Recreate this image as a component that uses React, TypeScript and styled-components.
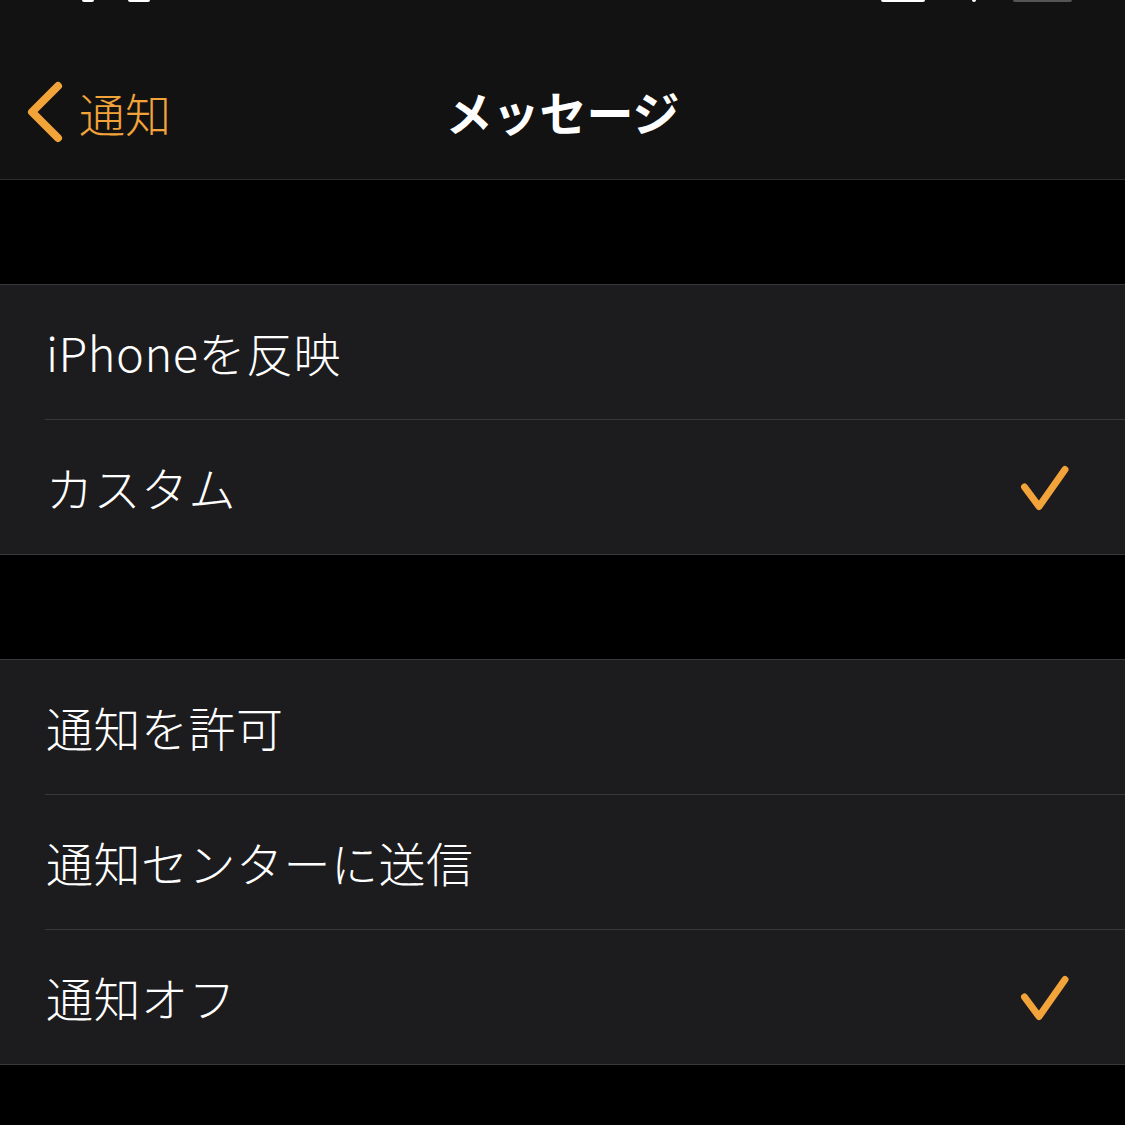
import styled, { createGlobalStyle } from "styled-components";

const GlobalStyle = createGlobalStyle`
  html, body {
    margin: 0;
    padding: 0;
    background: #000;
  }
  body {
    font-family: "Noto Sans CJK JP", "Noto Sans", sans-serif;
    color: #fff;
  }
`;

const ORANGE = "#f2a33a";

const Page = styled.div`
  width: 1125px;
  min-height: 1125px;
  background: #000;
  overflow: hidden;
`;

const NavBar = styled.header`
  height: 180px;
  background: #121212;
  border-bottom: 1px solid #2e2e30;
  box-sizing: border-box;
  display: flex;
  flex-direction: column;
`;

const StatusStrip = styled.div`
  height: 45px;
  display: flex;
  justify-content: space-between;
  align-items: flex-start;
  padding: 0 53px 0 82px;
`;

const StatusGroup = styled.div`
  display: flex;
`;

const StatusBit = styled.div<{ $width: number; $ml?: number; $color?: string }>`
  width: ${(p) => p.$width}px;
  margin-left: ${(p) => p.$ml || 0}px;
  height: 2px;
  border-radius: 0 0 2px 2px;
  background: ${(p) => p.$color || "#fff"};
`;

const NavRow = styled.div`
  flex: 1;
  display: grid;
  grid-template-columns: 1fr auto 1fr;
  align-items: center;
  padding: 0 0 0 27px;
`;

const BackButton = styled.div`
  display: flex;
  align-items: center;
  gap: 12px;
  color: ${ORANGE};
  font-size: 46px;
  line-height: 62px;
  font-weight: 300;
`;

const Title = styled.div`
  font-size: 47px;
  font-weight: 700;
  line-height: 1;
  margin-left: -27px;
  margin-top: -3px;
`;

const Gap = styled.div`
  height: 104px;
`;

const Group = styled.div`
  background: #1c1c1e;
  border-top: 1px solid #38383a;
  border-bottom: 1px solid #38383a;
`;

const Row = styled.div`
  height: 134px;
  padding: 0 56px 0 46px;
  display: flex;
  align-items: center;
  justify-content: space-between;
`;

const Separator = styled.div`
  height: 1px;
  margin-left: 45px;
  background: #38383a;
`;

const Label = styled.span`
  font-size: 47px;
  font-weight: 300;
  letter-spacing: 0.5px;
  line-height: 1;
  margin-top: -2px;
`;

function Chevron() {
  return (
    <svg width="40" height="62" viewBox="0 0 40 62">
      <polyline
        points="31,5 5,31 31,57"
        fill="none"
        stroke={ORANGE}
        strokeWidth="8"
        strokeLinecap="round"
        strokeLinejoin="round"
      />
    </svg>
  );
}

function Check() {
  return (
    <svg width="48" height="48" viewBox="0 0 48 48">
      <polyline
        points="3.5,24 18,43.5 44,6.5"
        fill="none"
        stroke={ORANGE}
        strokeWidth="7"
        strokeLinecap="round"
        strokeLinejoin="round"
      />
    </svg>
  );
}

const groups = [
  [
    { label: "iPhoneを反映", checked: false },
    { label: "カスタム", checked: true },
  ],
  [
    { label: "通知を許可", checked: false },
    { label: "通知センターに送信", checked: false },
    { label: "通知オフ", checked: true },
  ],
];

export default function App() {
  return (
    <Page>
      <GlobalStyle />
      <NavBar>
        <StatusStrip>
          <StatusGroup>
            <StatusBit $width={12} />
            <StatusBit $width={22} $ml={34} />
          </StatusGroup>
          <StatusGroup>
            <StatusBit $width={44} />
            <StatusBit $width={4} $ml={47} />
            <StatusBit $width={59} $ml={37} $color="#555" />
          </StatusGroup>
        </StatusStrip>
        <NavRow>
          <BackButton>
            <Chevron />
            <span>通知</span>
          </BackButton>
          <Title>メッセージ</Title>
          <div />
        </NavRow>
      </NavBar>
      {groups.map((rows, gi) => (
        <div key={gi}>
          <Gap />
          <Group>
            {rows.map((r, i) => (
              <div key={r.label}>
                {i > 0 && <Separator />}
                <Row>
                  <Label>{r.label}</Label>
                  {r.checked && <Check />}
                </Row>
              </div>
            ))}
          </Group>
        </div>
      ))}
    </Page>
  );
}
